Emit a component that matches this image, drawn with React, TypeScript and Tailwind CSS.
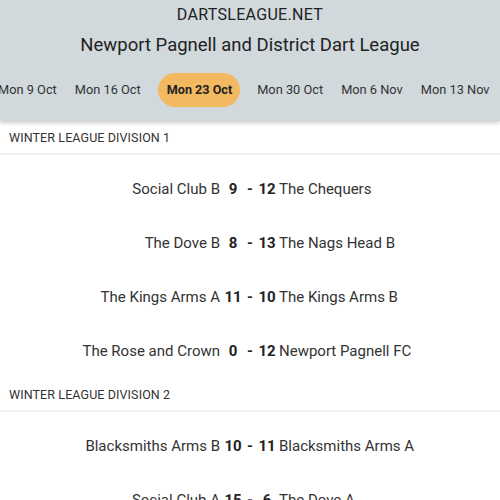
const dates = [
  "Mon 9 Oct",
  "Mon 16 Oct",
  "Mon 23 Oct",
  "Mon 30 Oct",
  "Mon 6 Nov",
  "Mon 13 Nov",
  "Mon 20 Nov",
];

const divisions = [
  {
    title: "Winter League Division 1",
    results: [
      { home: "Social Club B", hs: 9, as: 12, away: "The Chequers" },
      { home: "The Dove B", hs: 8, as: 13, away: "The Nags Head B" },
      { home: "The Kings Arms A", hs: 11, as: 10, away: "The Kings Arms B" },
      { home: "The Rose and Crown", hs: 0, as: 12, away: "Newport Pagnell FC" },
    ],
  },
  {
    title: "Winter League Division 2",
    results: [
      { home: "Blacksmiths Arms B", hs: 10, as: 11, away: "Blacksmiths Arms A" },
      { home: "Social Club A", hs: 15, as: 6, away: "The Dove A" },
    ],
  },
];

function Header() {
  return (
    <header className="bg-[#d1d9dd] shadow-[0_2px_4px_rgba(0,0,0,0.2)] relative z-10 h-[121px] overflow-hidden">
      <div className="text-center pt-[5px] text-[16px] leading-[20px] tracking-[0.3px] text-[#222]">
        DARTSLEAGUE.NET
      </div>
      <h1 className="text-center mt-[9px] text-[18.5px] leading-[22px] text-[#222]">
        Newport Pagnell and District Dart League
      </h1>
      <div className="flex items-center mt-[17px] ml-[-11px] whitespace-nowrap">
        {dates.map((d, i) =>
          d === "Mon 23 Oct" ? (
            <div
              key={i}
              className="mx-2 pl-[9px] pr-[8px] h-[34px] flex items-center rounded-full bg-[#f3b960] font-bold text-[12.6px] text-[#222]"
            >
              {d}
            </div>
          ) : (
            <div key={i} className="px-[9px] text-[12.8px] text-[#333]">
              {d}
            </div>
          )
        )}
      </div>
    </header>
  );
}

function Division({ title, results }: (typeof divisions)[number]) {
  return (
    <section>
      <div className="h-[34px] flex items-center pt-[2px] px-[9px] border-b-2 border-[#eef1f3] text-[12.5px] uppercase text-[#333] tracking-[0.1px]">
        {title}
      </div>
      <div className="pt-[7px]">
        {results.map((r, i) => (
          <div key={i} className="h-[54px] grid grid-cols-[1fr_auto_1fr] items-center text-[15px] text-[#333]">
            <span className="text-right pr-[2px]">{r.home}</span>
            <span className="flex items-center font-bold text-[#222]">
              <span className="w-[22px] text-center">{r.hs}</span>
              <span className="w-[12px] text-center">-</span>
              <span className="w-[22px] text-center">{r.as}</span>
            </span>
            <span className="pl-[1px]">{r.away}</span>
          </div>
        ))}
      </div>
    </section>
  );
}

export default function App() {
  return (
    <div className="w-[500px] h-[500px] overflow-hidden bg-white font-['Roboto',sans-serif]">
      <Header />
      {divisions.map((d, i) => (
        <Division key={i} {...d} />
      ))}
    </div>
  );
}
